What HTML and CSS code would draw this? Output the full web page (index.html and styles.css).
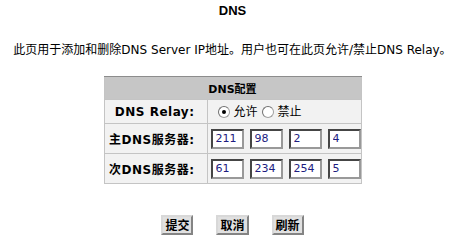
FILE: index.html
```html
<!DOCTYPE html>
<html lang="zh-CN">
<head>
    <meta charset="UTF-8">
    <title>DNS</title>
    <link rel="stylesheet" href="styles.css">
</head>
<body>
    <div class="page">
        <h1>DNS</h1>
        <p class="desc">此页用于添加和删除DNS Server IP地址。用户也可在此页允许/禁止DNS Relay。</p>

        <form id="dnsForm">
            <table class="cfg">
                <tr>
                    <th colspan="2">DNS配置</th>
                </tr>
                <tr class="row-relay">
                    <td class="label">DNS Relay:</td>
                    <td class="value">
                        <div class="radios">
                            <label class="radio"><input type="radio" name="relay" checked><span>允许</span></label>
                            <label class="radio"><input type="radio" name="relay"><span>禁止</span></label>
                        </div>
                    </td>
                </tr>
                <tr class="row-ip">
                    <td class="label">主DNS服务器:</td>
                    <td class="value">
                        <div class="ip">
                            <input type="text" value="211"><input type="text" value="98"><input type="text" value="2"><input type="text" value="4">
                        </div>
                    </td>
                </tr>
                <tr class="row-ip">
                    <td class="label">次DNS服务器:</td>
                    <td class="value">
                        <div class="ip">
                            <input type="text" value="61"><input type="text" value="234"><input type="text" value="254"><input type="text" value="5">
                        </div>
                    </td>
                </tr>
            </table>

            <div class="buttons">
                <button type="button">提交</button>
                <button type="button">取消</button>
                <button type="button">刷新</button>
            </div>
        </form>
    </div>
</body>
</html>
```

FILE: styles.css
```css
body {
    margin: 0;
    background-color: #fff;
    color: #000;
    font-family: "DejaVu Sans", "Noto Sans CJK SC", sans-serif;
    font-size: 12px;
}

.page {
    margin-left: 12px;
    padding-top: 3px;
}

h1 {
    margin: 0;
    text-align: center;
    font-family: "Liberation Sans", "Noto Sans CJK SC", sans-serif;
    font-size: 13px;
    font-weight: bold;
    line-height: 16px;
}

.desc {
    margin: 23px 0 0 0;
    text-align: center;
    font-size: 12px;
    line-height: 16px;
}

.cfg {
    margin: 18px auto 0 auto;
    width: 258px;
    border-collapse: collapse;
    border: 1px solid #c4c4c4;
}

.cfg th {
    height: 22px;
    padding: 0;
    background-color: #c6c6c6;
    border-top: 1px solid #8c8c8c;
    font-size: 11px;
    font-weight: bold;
    text-align: center;
}

.cfg td {
    padding: 0;
    background-color: #f2f2f2;
    border: 1px solid #c4c4c4;
}

.row-relay td {
    height: 23px;
}

.row-ip td {
    height: 29px;
}

.cfg .label {
    width: 96px;
    padding-right: 12px;
    text-align: right;
    font-size: 12px;
    font-weight: bold;
    letter-spacing: 0.5px;
}

.cfg .value {
    padding-left: 3px;
}

.radios {
    display: flex;
    align-items: center;
    gap: 4px;
    padding-left: 7px;
}

.radio {
    display: flex;
    align-items: center;
    gap: 4px;
}

.radio input {
    appearance: none;
    margin: 0;
    width: 12px;
    height: 12px;
    border-radius: 50%;
    border: 1px solid #a0a0a0;
    border-top-color: #707070;
    border-left-color: #707070;
    background-color: #fff;
    display: flex;
    align-items: center;
    justify-content: center;
}

.radio input:checked::after {
    content: "";
    width: 4px;
    height: 4px;
    border-radius: 50%;
    background-color: #000;
}

.radio span {
    font-size: 12px;
    line-height: 14px;
}

.ip {
    display: flex;
    gap: 6px;
}

.ip input {
    width: 33px;
    height: 20px;
    margin: 0;
    padding: 0 3px;
    box-sizing: border-box;
    border: 2px inset #999;
    background-color: #fff;
    color: #1c1c80;
    font-family: "DejaVu Sans", sans-serif;
    font-size: 11px;
}

.buttons {
    display: flex;
    justify-content: center;
    gap: 23px;
    margin-top: 31px;
}

button {
    padding: 1px 2px;
    height: 20px;
    background-color: #e0e0e0;
    border: 2px outset #d8d8d8;
    font-family: "Noto Sans CJK SC", sans-serif;
    font-size: 12px;
    font-weight: bold;
    line-height: 14px;
    color: #000;
    cursor: pointer;
}
```
